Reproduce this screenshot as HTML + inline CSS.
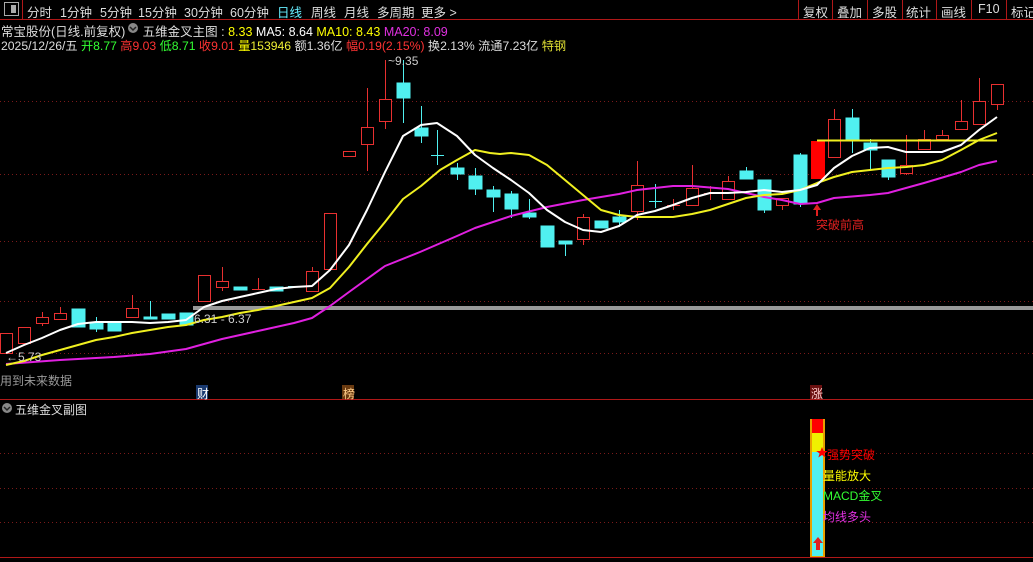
<!DOCTYPE html>
<html><head><meta charset="utf-8"><style>
body{margin:0;width:1033px;height:562px;background:#000;overflow:hidden;position:relative;font-family:"Liberation Sans","Noto Sans CJK SC",sans-serif;font-size:12px;color:#ddd}
.a{position:absolute;white-space:nowrap}
.t{position:absolute;top:2px;white-space:nowrap;font-size:12.5px}
</style></head><body>
<svg width="1033" height="562" style="position:absolute;left:0;top:0">
<line x1="0" y1="19.5" x2="1033" y2="19.5" stroke="#b01818"/>
<rect x="4.5" y="2.5" width="14" height="13" fill="none" stroke="#aaa"/>
<rect x="11" y="5" width="5" height="8" fill="#aaa"/>
<line x1="22.5" y1="0" x2="22.5" y2="19" stroke="#b01818"/>
<g stroke="#b01818"><line x1="798.5" y1="0" x2="798.5" y2="19"/><line x1="832.5" y1="0" x2="832.5" y2="19"/><line x1="867.5" y1="0" x2="867.5" y2="19"/><line x1="902.5" y1="0" x2="902.5" y2="19"/><line x1="936.5" y1="0" x2="936.5" y2="19"/><line x1="971.5" y1="0" x2="971.5" y2="19"/><line x1="1006.5" y1="0" x2="1006.5" y2="19"/></g>
<g stroke="#7a1a1a" stroke-dasharray="1,3">
<line x1="0" y1="101.5" x2="1033" y2="101.5"/><line x1="0" y1="174.5" x2="1033" y2="174.5"/><line x1="0" y1="241.5" x2="1033" y2="241.5"/><line x1="0" y1="301.5" x2="1033" y2="301.5"/><line x1="0" y1="353.5" x2="1033" y2="353.5"/>
<line x1="0" y1="453.5" x2="1033" y2="453.5"/><line x1="0" y1="488.5" x2="1033" y2="488.5"/><line x1="0" y1="522.5" x2="1033" y2="522.5"/>
</g>
<rect x="193" y="306" width="840" height="4" fill="#999"/>
<line x1="0" y1="399.5" x2="1033" y2="399.5" stroke="#b01818"/>
<line x1="0" y1="557.5" x2="1033" y2="557.5" stroke="#b01818"/>
<g stroke="#e83030" fill="#000" stroke-width="1">
<rect x="0.5" y="333.5" width="12" height="20"/>
<rect x="18.5" y="327.5" width="12" height="16"/>
<line x1="42.5" y1="312" x2="42.5" y2="326"/><rect x="36.5" y="317.5" width="12" height="6"/>
<line x1="60.5" y1="307" x2="60.5" y2="320"/><rect x="54.5" y="313.5" width="12" height="6"/>
<line x1="132.5" y1="295" x2="132.5" y2="318"/><rect x="126.5" y="308.5" width="12" height="9"/>
<rect x="198.5" y="275.5" width="12" height="26"/>
<line x1="222.5" y1="267" x2="222.5" y2="291"/><rect x="216.5" y="281.5" width="12" height="6"/>
<line x1="258.5" y1="278" x2="258.5" y2="289"/><line x1="252" y1="289.5" x2="265" y2="289.5"/>
<line x1="312.5" y1="267" x2="312.5" y2="271"/><rect x="306.5" y="271.5" width="12" height="20"/>
<rect x="324.5" y="213.5" width="12" height="56"/>
<rect x="343.5" y="151.5" width="12" height="5"/>
<line x1="367.5" y1="88" x2="367.5" y2="171"/><rect x="361.5" y="127.5" width="12" height="17"/>
<line x1="385.5" y1="60" x2="385.5" y2="129"/><rect x="379.5" y="99.5" width="12" height="22"/>
<line x1="583.5" y1="214" x2="583.5" y2="245"/><rect x="577.5" y="217.5" width="12" height="22"/>
<line x1="637.5" y1="161" x2="637.5" y2="220"/><rect x="631.5" y="185.5" width="12" height="26"/>
<line x1="673.5" y1="199" x2="673.5" y2="210"/><line x1="667" y1="205.5" x2="680" y2="205.5"/>
<line x1="692.5" y1="165" x2="692.5" y2="188"/><rect x="686.5" y="188.5" width="12" height="17"/>
<line x1="710.5" y1="186" x2="710.5" y2="200"/><line x1="704" y1="193.5" x2="717" y2="193.5"/>
<line x1="728.5" y1="176" x2="728.5" y2="181"/><rect x="722.5" y="181.5" width="12" height="18"/>
<line x1="782.5" y1="198" x2="782.5" y2="210"/><rect x="776.5" y="198.5" width="12" height="7"/>
<line x1="834.5" y1="109" x2="834.5" y2="119"/><rect x="828.5" y="119.5" width="12" height="38"/>
<line x1="906.5" y1="135" x2="906.5" y2="175"/><rect x="900.5" y="165.5" width="12" height="8"/>
<line x1="924.5" y1="130" x2="924.5" y2="149"/><rect x="918.5" y="139.5" width="12" height="10"/>
<line x1="942.5" y1="130" x2="942.5" y2="139"/><rect x="936.5" y="135.5" width="12" height="4"/>
<line x1="961.5" y1="100" x2="961.5" y2="130"/><rect x="955.5" y="121.5" width="12" height="8"/>
<line x1="979.5" y1="78" x2="979.5" y2="124"/><rect x="973.5" y="101.5" width="12" height="23"/>
<line x1="997.5" y1="104" x2="997.5" y2="110"/><rect x="991.5" y="84.5" width="12" height="20"/>
</g>
<rect x="811" y="141" width="14" height="38" fill="#f00"/>
<g stroke="#50f0f0" fill="#50f0f0">
<rect x="72" y="309" width="13" height="18"/>
<line x1="96.5" y1="317" x2="96.5" y2="332"/><rect x="90" y="323" width="13" height="6"/>
<rect x="108" y="323" width="13" height="8"/>
<line x1="150.5" y1="301" x2="150.5" y2="319"/><rect x="144" y="317" width="13" height="2"/>
<rect x="162" y="314" width="13" height="5"/>
<rect x="180" y="313" width="13" height="12"/>
<rect x="234" y="287" width="13" height="3"/>
<rect x="270" y="287" width="13" height="4"/>
<line x1="288" y1="286.5" x2="301" y2="286.5"/>
<line x1="403.5" y1="60" x2="403.5" y2="123"/><rect x="397" y="83" width="13" height="15"/>
<line x1="421.5" y1="106" x2="421.5" y2="143"/><rect x="415" y="128" width="13" height="8"/>
<line x1="437.5" y1="130" x2="437.5" y2="165"/><line x1="431" y1="155.5" x2="444" y2="155.5"/>
<line x1="457.5" y1="163" x2="457.5" y2="180"/><rect x="451" y="168" width="13" height="6"/>
<line x1="475.5" y1="168" x2="475.5" y2="195"/><rect x="469" y="176" width="13" height="13"/>
<line x1="493.5" y1="186" x2="493.5" y2="212"/><rect x="487" y="190" width="13" height="7"/>
<line x1="511.5" y1="191" x2="511.5" y2="218"/><rect x="505" y="194" width="13" height="15"/>
<line x1="529.5" y1="199" x2="529.5" y2="219"/><rect x="523" y="213" width="13" height="4"/>
<rect x="541" y="226" width="13" height="21"/>
<line x1="565.5" y1="241" x2="565.5" y2="256"/><rect x="559" y="241" width="13" height="3"/>
<rect x="595" y="221" width="13" height="7"/>
<line x1="619.5" y1="210" x2="619.5" y2="227"/><rect x="613" y="217" width="13" height="5"/>
<line x1="655.5" y1="184" x2="655.5" y2="208"/><line x1="649" y1="201.5" x2="662" y2="201.5"/>
<line x1="746.5" y1="167" x2="746.5" y2="179"/><rect x="740" y="171" width="13" height="8"/>
<line x1="764.5" y1="180" x2="764.5" y2="213"/><rect x="758" y="180" width="13" height="30"/>
<line x1="800.5" y1="153" x2="800.5" y2="207"/><rect x="794" y="155" width="13" height="49"/>
<line x1="852.5" y1="109" x2="852.5" y2="153"/><rect x="846" y="118" width="13" height="21"/>
<line x1="870.5" y1="139" x2="870.5" y2="170"/><rect x="864" y="143" width="13" height="7"/>
<line x1="888.5" y1="160" x2="888.5" y2="180"/><rect x="882" y="160" width="13" height="17"/>
</g>
<g fill="none" stroke-width="2" stroke-linejoin="round">
<polyline stroke="#e020e0" points="6,364 60,360 114,357 150,354 186,349 222,339 258,331 294,323 312,318 330,306 349,292 385,266 420,252 457,236 475,228 511,216 547,207 583,200 619,194 637,190 673,186 692,186 728,189 764,197 782,200 800,204 817,203 834,198 870,195 888,193 924,183 961,172 979,165 997,161"/>
<polyline stroke="#f0f020" points="6,365 24,361 42,355 60,350 78,345 96,340 114,337 132,333 150,330 168,327 186,325 204,320 222,317 240,313 258,310 276,306 294,302 312,298 330,288 349,267 367,244 385,222 403,199 421,186 440,170 457,160 475,150 490,153 500,154 511,153 529,155 547,165 565,180 583,195 601,210 619,215 637,217 655,217 673,217 692,214 710,210 728,204 746,198 764,195 782,194 800,190 817,183 834,177 852,172 870,170 888,168 906,167 924,165 942,160 961,150 979,140 997,133"/>
<line x1="817" y1="140.5" x2="997" y2="140.5" stroke="#f0f020"/>
<polyline stroke="#fff" points="6,353 24,345 42,338 60,330 78,324 96,322 114,322 132,322 150,323 168,322 186,320 204,307 222,301 240,297 258,293 276,289 294,287 312,286 330,270 349,245 367,210 385,172 403,136 421,125 437,123 457,136 475,155 493,168 511,180 529,193 547,210 565,222 583,230 601,232 619,226 637,215 655,211 673,205 692,198 710,193 728,193 746,192 764,190 782,192 800,190 817,185 834,168 852,156 870,148 888,147 906,152 924,152 942,152 961,145 979,130 997,117"/>
</g>
<path d="M817 204 L813 210 L816 210 L816 216 L818 216 L818 210 L821 210 Z" fill="#e02020"/>
<rect x="810" y="419" width="15" height="138" fill="#e8a000"/>
<rect x="812" y="419" width="11" height="14" fill="#f00"/>
<rect x="812" y="433" width="11" height="19" fill="#f0f000"/>
<rect x="812" y="452" width="11" height="104" fill="#50f0f0"/>
<path d="M818 537 L813 543 L816 543 L816 550 L820 550 L820 543 L823 543 Z" fill="#e02020"/>
<path d="M822 447 l1.6 4 4.2 0 -3.4 2.5 1.3 4 -3.7-2.5 -3.7 2.5 1.3-4 -3.4-2.5 4.2 0z" fill="#f00"/>
<rect x="196" y="385" width="12" height="14" fill="#1a3a70"/>
<rect x="342" y="385" width="12" height="14" fill="#6a3a10"/>
<rect x="810" y="385" width="12" height="14" fill="#6a1010"/>
<circle cx="133" cy="28" r="5" fill="#888"/><path d="M130 27 l3 3 3-3" stroke="#222" fill="none" stroke-width="1.5"/>
<circle cx="7" cy="408" r="5" fill="#888"/><path d="M4 407 l3 3 3-3" stroke="#222" fill="none" stroke-width="1.5"/>
</svg>
<div class="t" style="left:27px">分时</div><div class="t" style="left:60px">1分钟</div><div class="t" style="left:100px">5分钟</div><div class="t" style="left:138px">15分钟</div><div class="t" style="left:184px">30分钟</div><div class="t" style="left:230px">60分钟</div><div class="t" style="left:277px;color:#6ef">日线</div><div class="t" style="left:311px">周线</div><div class="t" style="left:344px">月线</div><div class="t" style="left:377px">多周期</div><div class="t" style="left:421px">更多 &gt;</div>
<div class="t" style="left:803px">复权</div><div class="t" style="left:837px">叠加</div><div class="t" style="left:872px">多股</div><div class="t" style="left:906px">统计</div><div class="t" style="left:941px">画线</div><div class="t" style="left:978px">F10</div><div class="t" style="left:1011px">标记</div>
<div class="a" style="left:1px;top:21px;font-size:12.5px">常宝股份(日线.前复权)&nbsp;&nbsp;&nbsp;&nbsp; 五维金叉主图 : <span style="color:#ff0">8.33</span> <span style="color:#fff">MA5: 8.64</span> <span style="color:#ff0">MA10: 8.43</span> <span style="color:#e030e0">MA20: 8.09</span></div>
<div class="a" style="left:1px;top:36px;font-size:12.2px">2025/12/26/五 <span style="color:#3f3">开8.77</span> <span style="color:#f33">高9.03</span> <span style="color:#3f3">低8.71</span> <span style="color:#f33">收9.01</span> <span style="color:#ff0">量</span><span style="color:#ee3">153946</span> 额1.36亿 <span style="color:#f33">幅0.19(2.15%)</span> 换2.13% 流通7.23亿 <span style="color:#dd3">特钢</span></div>
<div class="a" style="left:388px;top:54px;color:#ccc">~9.35</div>
<div class="a" style="left:194px;top:312px;color:#ccc">6.31 - 6.37</div>
<div class="a" style="left:6px;top:350px;color:#ccc">←5.73</div>
<div class="a" style="left:0px;top:372px;color:#999">用到未来数据</div>
<div class="a" style="left:197px;top:385px;color:#fff">财</div>
<div class="a" style="left:343px;top:385px;color:#fc8">榜</div>
<div class="a" style="left:811px;top:385px;color:#fcc">涨</div>
<div class="a" style="left:816px;top:216px;color:#e02020">突破前高</div>
<div class="a" style="left:15px;top:401px;color:#ddd">五维金叉副图</div>
<div class="a" style="left:827px;top:446px;color:#f00">强势突破</div>
<div class="a" style="left:823px;top:467px;color:#ff0">量能放大</div>
<div class="a" style="left:823px;top:487px;color:#3f3">MACD金叉</div>
<div class="a" style="left:823px;top:508px;color:#e030e0">均线多头</div>
</body></html>
